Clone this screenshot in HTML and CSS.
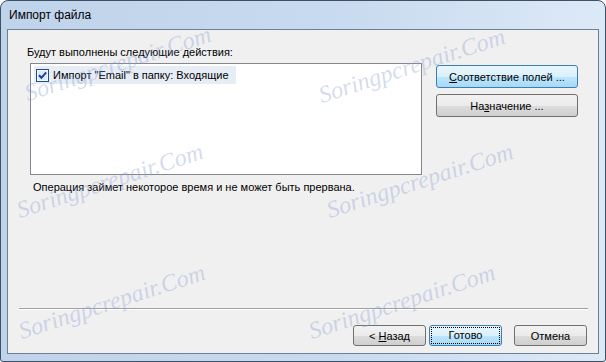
FILE: index.html
```html
<!DOCTYPE html>
<html lang="ru">
<head>
  <meta charset="UTF-8">
  <title>Импорт файла</title>
  <link rel="stylesheet" href="styles.css">
</head>
<body>
  <div class="window">
    <div class="titlebar">Импорт файла</div>
    <div class="client">
      <div class="main">
        <div class="left">
          <div class="label">Будут выполнены следующие действия:</div>
          <div class="listbox">
            <div class="item">
              <span class="check">
                <svg width="13" height="13" viewBox="0 0 13 13">
                  <rect x="0.5" y="0.5" width="12" height="12" fill="#f4f8fc" stroke="#1d5281"/>
                  <rect x="2" y="2" width="9" height="9" fill="#dbe8f6"/>
                  <path d="M3 6.3 L5.4 8.8 L10.2 3.4" fill="none" stroke="#1b3fa0" stroke-width="2"/>
                </svg>
              </span>
              Импорт "Email" в папку: Входящие
            </div>
          </div>
          <div class="note">Операция займет некоторое время и не может быть прервана.</div>
        </div>
        <div class="side">
          <button class="btn btn-hot"><u>С</u>оответствие полей ...</button>
          <button class="btn">На<u>з</u>начение ...</button>
        </div>
      </div>
      <div class="separator"></div>
      <div class="footer">
        <button class="btn btn-small">&lt; <u>Н</u>азад</button>
        <button class="btn btn-small btn-default"><span class="focus">Готово</span></button>
        <button class="btn btn-small btn-cancel">Отмена</button>
      </div>
    </div>

    <!-- watermark -->
    <span class="mark" style="left:28px;top:80px">Soringpcrepair.Com</span>
    <span class="mark" style="left:20px;top:197px">Soringpcrepair.Com</span>
    <span class="mark" style="left:22px;top:318px">Soringpcrepair.Com</span>
    <span class="mark" style="left:322px;top:82px">Soringpcrepair.Com</span>
    <span class="mark" style="left:330px;top:197px">Soringpcrepair.Com</span>
    <span class="mark" style="left:312px;top:318px">Soringpcrepair.Com</span>
  </div>
</body>
</html>
```

FILE: styles.css
```css
body {
  margin: 0;
  background: #ffffff;
  font-family: "Liberation Sans", Arial, sans-serif;
  font-size: 11px;
  color: #000;
}
.window {
  position: relative;
  width: 604px;
  height: 360px;
  border: 1px solid #3e4f66;
  border-radius: 8px 8px 3px 3px;
  background: linear-gradient(to right, #bfd3ea 0%, #c8daef 55%, #dce9f7 100%);
  overflow: hidden;
}
.titlebar {
  height: 28px;
  line-height: 29px;
  padding-left: 8px;
  font-size: 12px;
}
.client {
  margin-left: 6px;
  width: 590px;
  height: 323px;
  border: 1px solid #6f7f95;
  background: #f0f0f0;
  display: flex;
  flex-direction: column;
}
.main {
  display: flex;
  height: 277px;
}
.left {
  width: 420px;
}
.label {
  margin: 15px 0 0 19px;
  line-height: 15px;
}
.listbox {
  margin: 3px 0 0 22px;
  width: 392px;
  height: 112px;
  border: 1px solid #828790;
  background: #fff;
  padding: 2px 0 0 3px;
  box-sizing: border-box;
}
.item {
  display: inline-flex;
  align-items: center;
  height: 18px;
  padding: 0 7px 0 2px;
  background: #e7edf5;
}
.check {
  display: inline-flex;
  margin-right: 4px;
}
.note {
  margin: 5px 0 0 25px;
  line-height: 15px;
}
.side {
  display: flex;
  flex-direction: column;
  gap: 6px;
  padding: 35px 0 0 8px;
}
.btn {
  font-family: inherit;
  font-size: 11px;
  width: 142px;
  height: 23px;
  padding: 0;
  border: 1px solid #707070;
  border-radius: 3px;
  background: linear-gradient(to bottom, #f2f2f2 0%, #ebebeb 50%, #dddddd 51%, #cfcfcf 100%);
  color: #000;
}
.btn-hot {
  border-color: #3c7fb1;
  background: linear-gradient(to bottom, #eaf6fd 0%, #d9f0fc 50%, #bee6fd 51%, #a7d9f5 100%);
}
.separator {
  margin: 1px 10px 0 11px;
  height: 1px;
  border-top: 1px solid #a0a0a0;
  background: #fff;
}
.footer {
  display: flex;
  justify-content: flex-end;
  padding: 15px 11px 0 0;
}
.btn-small {
  width: 73px;
  height: 21px;
}
.btn-default {
  margin-left: 3px;
  border-color: #3c7fb1;
  background: linear-gradient(to bottom, #eaf6fd 0%, #d9f0fc 50%, #bee6fd 51%, #a7d9f5 100%);
}
.focus {
  display: block;
  margin: 1px;
  line-height: 15px;
  border: 1px dotted #000;
}
.btn-cancel {
  margin-left: 12px;
}
.mark {
  position: absolute;
  font-family: "Liberation Serif", serif;
  font-style: italic;
  font-size: 24px;
  line-height: 1;
  color: rgba(140, 160, 212, 0.38);
  transform: rotate(-18deg);
  transform-origin: 0 100%;
  white-space: nowrap;
  pointer-events: none;
}
```
